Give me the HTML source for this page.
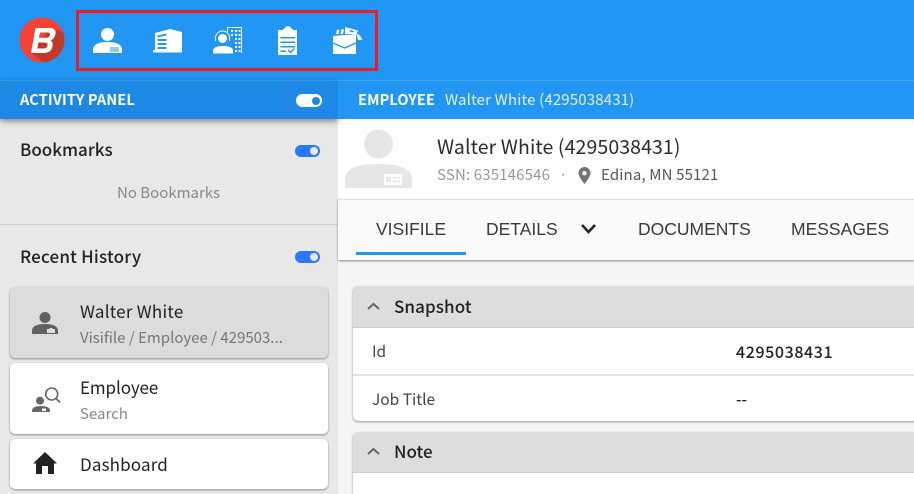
<!DOCTYPE html>
<html><head><meta charset="utf-8"><style>
*{box-sizing:border-box;margin:0;padding:0}
html,body{width:914px;height:494px;overflow:hidden;background:#f5f5f5}
body{position:relative;font-family:"Noto Sans CJK JP","Liberation Sans",sans-serif;color:#222}
.a{position:absolute}
.t{position:absolute;white-space:nowrap;line-height:20px}
.tab{position:absolute;white-space:nowrap;font-family:"Liberation Sans",sans-serif;font-size:17.5px;line-height:20px;color:#3a3a3a;top:219px}
.card{position:absolute;left:10px;width:318px;background:#fff;border-radius:5px;box-shadow:0 1px 2px rgba(0,0,0,.4)}
.tg{position:absolute;width:25px;height:12px;border-radius:6px;background:#2979ff}
.tg i{position:absolute;right:2.500px;top:2px;width:8px;height:8px;border-radius:50%;background:#e8e8ff}
</style></head><body>
<div class="a" style="left:0;top:0;width:914px;height:81px;background:#2196f3;border-bottom:1px solid #42a5f5"></div>

<svg class="a" style="left:0;top:0" width="400" height="81" viewBox="0 0 400 81">
<circle cx="42" cy="40" r="22.500" fill="#f44336"/>
<path d="M31 53 L51 28 L63 32 A22.500 22.500 0 0 1 44 62.400 Z" fill="#c0392b"/>
<path fill-rule="evenodd" d="M35.500 28 H49 Q56.500 28 55.500 34 Q54.500 39 50.500 40.500 Q53.500 42 52.500 46 Q51.500 53 43 53 H31 Z M40 32.500 L39 37.800 H46 Q49.500 37.800 50 35 Q50.300 32.500 47.500 32.500 Z M38.300 42.500 L37.300 48.500 H43.500 Q47 48.500 47.500 45.500 Q48 42.500 44.500 42.500 Z" fill="#fff"/>
<rect x="77.500" y="11.500" width="299" height="58" fill="none" stroke="#ed1c24" stroke-width="3"/>
<g fill="#fff">
<circle cx="107.500" cy="34.500" r="6.500"/>
<path d="M93 53 V49 Q94 42 107.500 42 Q121 42 122 49 V53 Z"/>
<path d="M110 47 h9 v5 h-9 z" fill="#90caf9"/>
<path d="M155 33 L170 29 L182 32 V50 H155 Z"/>
<path d="M153 50 H182 V52.500 H153 Z"/>
<path d="M157.500 35.500 L166.500 33.500 V35.500 L157.500 37.500 Z M157.500 39 H166.500 V41 H157.500 Z M157.500 43 H166.500 V45 H157.500 Z M157.500 47 H166.500 V49 H157.500 Z" fill="#2196f3"/>
<path d="M227 27 H242 V53 H241 V28 H228 V33 H227 Z"/>
<path d="M231 30h2v2h-2zM235 30h2v2h-2zM238.500 30h2v2h-2zM231 34h2v2h-2zM235 34h2v2h-2zM238.500 34h2v2h-2zM235 38h2v2h-2zM238.500 38h2v2h-2zM235 42h2v2h-2zM238.500 42h2v2h-2zM235 46h2v2h-2zM238.500 46h2v2h-2zM235 50h2v2h-2zM238.500 50h2v2h-2z"/>
<circle cx="222.500" cy="38.500" r="4.500"/>
<path d="M215.500 41 V38 a7 7 0 0 1 14 0 V41" fill="none" stroke="#fff" stroke-width="1"/>
<path d="M213 53.500 V50 Q214 46 222.500 46 Q232 46 233 50 V53.500 Z"/>
<path d="M278 30 H283 V29 Q285 29 285.500 27 Q288 25 290.500 27 Q291 29 293 29 V30 H297 V55 H278 Z"/>
<path d="M280.500 37 H295 V38.500 H280.500 Z M280.500 41.500 H295 V43 H280.500 Z M280.500 46 H295 V47.500 H280.500 Z M280.500 50.500 H286 V52 H280.500 Z" fill="#2196f3"/>
<path d="M288 50 L290.500 52.500 L294.500 48.500" fill="none" stroke="#2196f3" stroke-width="1.500"/>
<path d="M333 36 L344 35 H356 V54 H333 Z"/>
<path d="M333 43 L344.500 48 L356 43" fill="none" stroke="#2196f3" stroke-width="1.300"/>
<path d="M336 34 L337 29.500 L339.500 30 L338.500 34 Z M340.500 34 L341.500 29 L344 29.500 L343 34 Z M345 27 L358 30.500 L356.500 35 L345 34 Z"/>
<path d="M350 30 L354 31 L353.500 32.500 L349.500 31.500 Z" fill="#2196f3"/>
<path d="M357 34 Q361 35 362 40 H358.500 L357 37 Z"/>
</g>
</svg>

<div class="a" style="left:0;top:81px;width:338px;height:38px;background:#1e88e5;box-shadow:0 2px 6px rgba(0,0,0,.45);z-index:3"></div>
<div class="t" style="left:20px;top:90px;font-size:14.500px;letter-spacing:.15px;font-weight:700;color:#fff;z-index:4">ACTIVITY PANEL</div>
<div class="tg" style="left:296px;top:94px;width:26px;height:13px;border-radius:7px;background:#fff;z-index:4"><i style="background:#1e88e5;top:2.500px"></i></div>

<div class="a" style="left:338px;top:81px;width:576px;height:38px;background:#2196f3;z-index:5"></div>
<div class="t" style="left:358px;top:90px;font-size:14.500px;letter-spacing:.15px;font-weight:700;color:#fff;z-index:6">EMPLOYEE</div>
<div class="t" style="left:445px;top:90px;font-size:15px;letter-spacing:.16px;color:#e3f2fd;z-index:6">Walter White (4295038431)</div>

<div class="a" style="left:0;top:119px;width:338px;height:375px;background:#e8e8e8"></div>
<div class="t" style="left:20px;top:139px;font-size:17px;font-weight:500;color:#222">Bookmarks</div>
<div class="tg" style="left:295px;top:145px"><i></i></div>
<div class="t" style="left:117px;top:183px;font-size:15px;color:#888">No Bookmarks</div>
<div class="a" style="left:0;top:224px;width:338px;height:1px;background:#cfcfcf"></div>
<div class="t" style="left:20px;top:246px;font-size:17px;letter-spacing:.2px;font-weight:500;color:#222">Recent History</div>
<div class="tg" style="left:295px;top:251px"><i></i></div>

<div class="card" style="top:287px;height:71px;background:#dcdcdc"></div>
<svg class="a" style="left:30px;top:310px" width="30" height="26" viewBox="0 0 30 26"><circle cx="15" cy="7.500" r="5.500" fill="#616161"/><path d="M2 24 V20 Q3 14 15 14 Q27 14 28 20 V24 Z" fill="#616161"/><path d="M17 19 h2.500 v-1 h3 v1 h2.500 v4 h-8 z" fill="#ddd"/></svg>
<div class="t" style="left:80px;top:301px;font-size:17px;letter-spacing:.25px;color:#222">Walter White</div>
<div class="t" style="left:80px;top:328px;font-size:15px;color:#777">Visifile / Employee / 429503...</div>

<div class="card" style="top:363px;height:71px"></div>
<svg class="a" style="left:30px;top:385px" width="32" height="30" viewBox="0 0 32 30"><circle cx="10" cy="15.700" r="4" fill="#666"/><path d="M2 27 V25 Q3 21 11 21 Q19 21 20 25 V27 Z" fill="#666"/><rect x="12" y="23.500" width="4" height="2.500" fill="#fff"/><circle cx="21.700" cy="9" r="6" fill="none" stroke="#666" stroke-width="1.600"/><path d="M26 13.500 L30 17.500" stroke="#666" stroke-width="1.800"/></svg>
<div class="t" style="left:80px;top:377px;font-size:17px;letter-spacing:-.1px;color:#222">Employee</div>
<div class="t" style="left:80px;top:404px;font-size:15px;color:#888">Search</div>

<div class="card" style="top:439px;height:50px"></div>
<svg class="a" style="left:33px;top:452px" width="24" height="23" viewBox="0 0 24 23"><path d="M12 0 L24 11.500 H21 V22 H15 V14 H9 V22 H3 V11.500 H0 Z" fill="#222"/></svg>
<div class="t" style="left:80px;top:454px;font-size:17px;letter-spacing:.15px;color:#222">Dashboard</div>

<div class="a" style="left:338px;top:119px;width:576px;height:80px;background:#fff"></div>
<svg class="a" style="left:345px;top:129px" width="67" height="60" viewBox="0 0 67 60"><circle cx="33.500" cy="15" r="14.500" fill="#e6e6e6"/><path d="M0 59 V49 Q2 35 33.500 35 Q65 35 67 49 V59 Z" fill="#e6e6e6"/><rect x="39" y="45" width="18" height="11" fill="#fff"/><rect x="41" y="48" width="5" height="5" fill="#e6e6e6"/><rect x="48" y="48" width="7" height="1.500" fill="#e6e6e6"/><rect x="48" y="51.500" width="7" height="1.500" fill="#e6e6e6"/></svg>
<div class="t" style="left:437px;top:136px;font-size:19.500px;letter-spacing:.1px;color:#2c2c2c">Walter White (4295038431)</div>
<div class="t" style="left:437px;top:165px;font-size:15px;letter-spacing:.15px;color:#999">SSN: 635146546</div>
<div class="t" style="left:559px;top:165px;font-size:15px;color:#999">·</div>
<svg class="a" style="left:578px;top:167px" width="13" height="17" viewBox="0 0 13 17"><path fill-rule="evenodd" d="M6.500 0 A6 6 0 0 1 12.500 6 C12.500 10 6.500 17 6.500 17 C6.500 17 .5 10 .5 6 A6 6 0 0 1 6.500 0 Z M6.500 4 A2.200 2.200 0 1 0 6.500 8.400 A2.200 2.200 0 1 0 6.500 4 Z" fill="#757575"/></svg>
<div class="t" style="left:601px;top:165px;font-size:15px;letter-spacing:.15px;color:#555">Edina, MN 55121</div>

<div class="a" style="left:338px;top:199px;width:576px;height:61px;background:#fafafa;border-top:1px solid #e0e0e0;box-shadow:0 1px 2px rgba(0,0,0,.45)"></div>
<div class="tab" style="left:376px">VISIFILE</div>
<div class="tab" style="left:486px">DETAILS</div>
<svg class="a" style="left:580px;top:223px" width="17" height="12" viewBox="0 0 17 12"><path d="M2 2 L8.500 9 L15 2" fill="none" stroke="#222" stroke-width="2.500"/></svg>
<div class="tab" style="left:638px">DOCUMENTS</div>
<div class="tab" style="left:791px">MESSAGES</div>
<div class="a" style="left:356px;top:252px;width:110px;height:3px;background:#2196f3"></div>

<div class="a" style="left:353px;top:286px;width:570px;height:135px;background:#fff;border-radius:5px;box-shadow:0 1px 2px rgba(0,0,0,.4)"></div>
<div class="a" style="left:353px;top:286px;width:570px;height:42px;background:#ddd;border-radius:5px 5px 0 0;border-bottom:1px solid #ccc"></div>
<svg class="a" style="left:366px;top:301px" width="15" height="10" viewBox="0 0 15 10"><path d="M2 8 L7.500 3 L13 8" fill="none" stroke="#666" stroke-width="2"/></svg>
<div class="t" style="left:394px;top:296px;font-size:17px;letter-spacing:.1px;font-weight:500;color:#222">Snapshot</div>
<div class="t" style="left:372px;top:341px;font-size:15.500px;color:#444">Id</div>
<div class="t" style="left:736px;top:341px;font-size:16px;letter-spacing:.6px;font-weight:500;color:#222">4295038431</div>
<div class="a" style="left:353px;top:374px;width:561px;height:2px;background:#e2e2e2"></div>
<div class="t" style="left:372px;top:389px;font-size:15.500px;color:#444">Job Title</div>
<div class="t" style="left:736px;top:389px;font-size:15.500px;font-weight:500;color:#222">--</div>

<div class="a" style="left:353px;top:432px;width:570px;height:70px;background:#fff;border-radius:5px;box-shadow:0 1px 2px rgba(0,0,0,.4)"></div>
<div class="a" style="left:353px;top:432px;width:570px;height:41px;background:#ddd;border-radius:5px 5px 0 0;border-bottom:1px solid #ccc"></div>
<svg class="a" style="left:366px;top:446px" width="15" height="10" viewBox="0 0 15 10"><path d="M2 8 L7.500 3 L13 8" fill="none" stroke="#666" stroke-width="2"/></svg>
<div class="t" style="left:394px;top:441px;font-size:17px;font-weight:500;color:#222">Note</div>
</body></html>
